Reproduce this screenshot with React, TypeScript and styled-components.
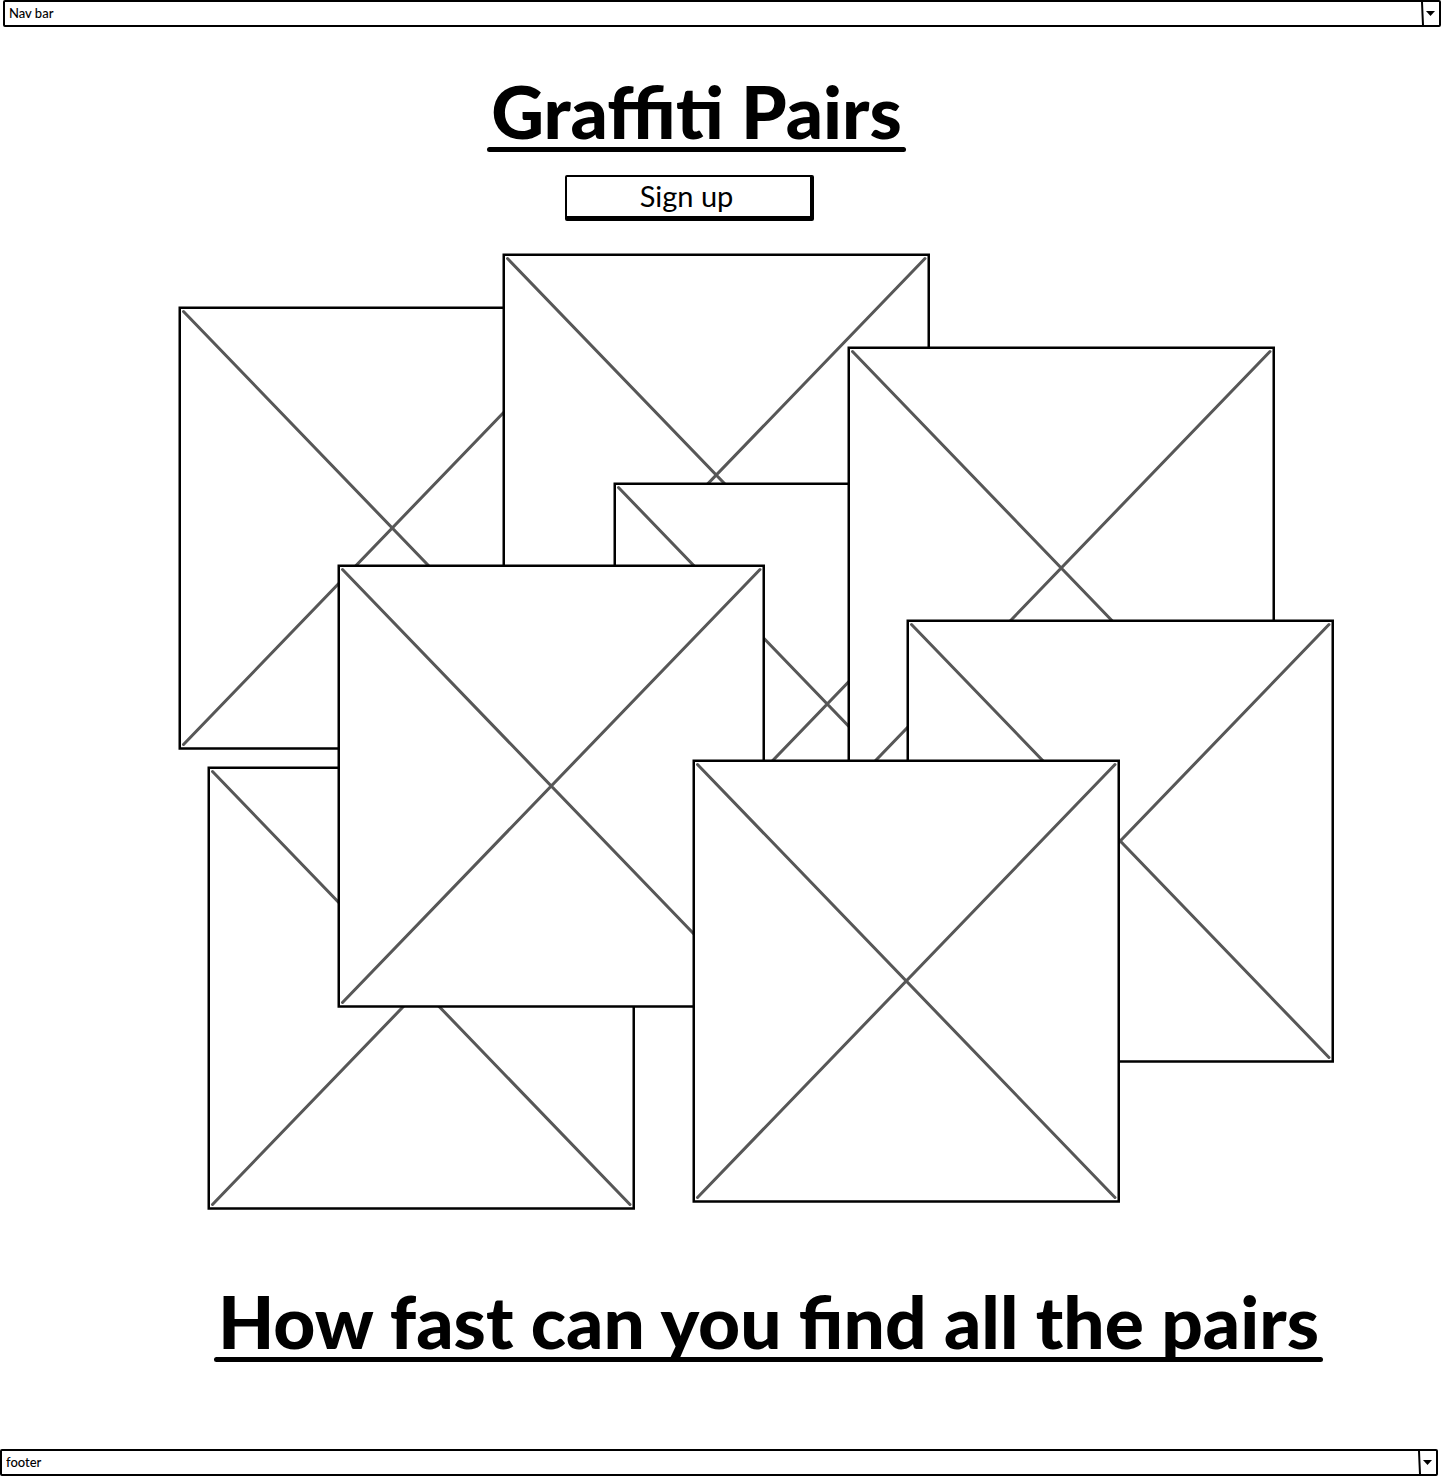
import React from "react";
import styled, { createGlobalStyle } from "styled-components";

const GlobalStyle = createGlobalStyle`
  * { box-sizing: border-box; }
  body {
    margin: 0;
    background: #fff;
    color: #000;
    font-family: Lato, "Open Sans", sans-serif;
  }
`;

const Page = styled.div`
  display: flex;
  flex-direction: column;
  min-height: 100vh;
`;

const Bar = styled.div<{ $end?: boolean }>`
  display: grid;
  grid-template-columns: 1fr 18px;
  height: 27px;
  margin: ${(p) => (p.$end ? "0 3px 0 0" : "0 0 0 3px")};
  border: 2px solid #000;
  border-radius: 2px;
`;

const BarSelect = styled.select`
  grid-area: 1 / 1 / 2 / 3;
  width: 100%;
  margin: 0;
  padding: 0 24px 2px 4px;
  border: 0;
  background: transparent;
  color: #000;
  font: 500 13px / 20px Lato, "Open Sans", sans-serif;
  appearance: none;
`;

const BarArrow = styled.svg`
  grid-area: 1 / 2 / 2 / 3;
  width: 18px;
  height: 23px;
  pointer-events: none;
`;

const Main = styled.main`
  flex: 1;
  display: flex;
  flex-direction: column;
`;

const Heading = styled.h1`
  display: flex;
  flex-direction: column;
  width: max-content;
  max-width: 100%;
  margin: 0;
  padding: 0 4px;
  font-size: 73px;
  line-height: 72px;
  font-weight: 900;
  &::after {
    content: "";
    height: 5px;
    margin: 0 -4px;
    border-radius: 3px;
    background: #000;
  }
`;

const Intro = styled.header`
  display: flex;
  flex-direction: column;
  align-items: center;
  gap: 23px;
  padding: 48px 48px 0 0;
`;

const SignUp = styled.button`
  width: 249px;
  height: 46px;
  margin-right: 14px;
  padding: 0 4px 2px 0;
  border: solid #000;
  border-width: 2px 4px 5px 2px;
  border-radius: 2px;
  background: #fff;
  color: #000;
  font: 400 29px / 36px Lato, "Open Sans", sans-serif;
`;

const Collage = styled.section`
  margin: 32px 107px 0 178px;
`;

const Canvas = styled.div`
  position: relative;
  aspect-ratio: 1156 / 957;
`;

const Picture = styled.figure`
  position: absolute;
  margin: 0;
`;

const Placeholder = styled.svg`
  display: block;
  width: 100%;
  height: 100%;
`;

const Tagline = styled.section`
  display: flex;
  justify-content: center;
  padding: 75px 0 0 96px;
`;

const CANVAS = { width: 1156, height: 957 };
const CARD = { width: 428, height: 444 };

const pictures = [
  { x: 0, y: 53 },
  { x: 324, y: 0 },
  { x: 435, y: 229 },
  { x: 669, y: 93 },
  { x: 728, y: 366 },
  { x: 29, y: 513 },
  { x: 159, y: 311 },
  { x: 514, y: 506 },
];

const percent = (part: number, whole: number) => `${(part / whole) * 100}%`;

function DropBar({ label, end }: { label: string; end?: boolean }) {
  return (
    <Bar $end={end}>
      <BarSelect aria-label={label} defaultValue={label}>
        <option>{label}</option>
      </BarSelect>
      <BarArrow viewBox="0 0 18 23" aria-hidden="true">
        <path d="M1 0 1.500 12 2 23" fill="none" stroke="#000" strokeWidth="2" />
        <path d="M5 9h9L9.500 14z" />
      </BarArrow>
    </Bar>
  );
}

export default function App() {
  return (
    <Page>
      <GlobalStyle />
      <nav>
        <DropBar label="Nav bar" />
      </nav>
      <Main>
        <Intro>
          <Heading>Graffiti Pairs</Heading>
          <SignUp type="button">Sign up</SignUp>
        </Intro>
        <Collage aria-label="Pictures">
          <Canvas>
            {pictures.map(({ x, y }) => (
              <Picture
                key={`${x}-${y}`}
                style={{
                  left: percent(x, CANVAS.width),
                  top: percent(y, CANVAS.height),
                  width: percent(CARD.width, CANVAS.width),
                  height: percent(CARD.height, CANVAS.height),
                }}
              >
                <Placeholder viewBox="0 0 428 444" preserveAspectRatio="none" aria-hidden="true">
                  <path
                    d="M1.750 1.750H426.750V442.500H1.750z"
                    fill="#fff"
                    stroke="#000"
                    strokeWidth="2.500"
                  />
                  <path
                    d="M5.500 5.500 423 438.500M423 5.500 5.500 438.500"
                    fill="none"
                    stroke="#575757"
                    strokeWidth="3"
                    strokeLinecap="round"
                  />
                </Placeholder>
              </Picture>
            ))}
          </Canvas>
        </Collage>
        <Tagline>
          <Heading as="h2">How fast can you find all the pairs</Heading>
        </Tagline>
      </Main>
      <footer>
        <DropBar label="footer" end />
      </footer>
    </Page>
  );
}
